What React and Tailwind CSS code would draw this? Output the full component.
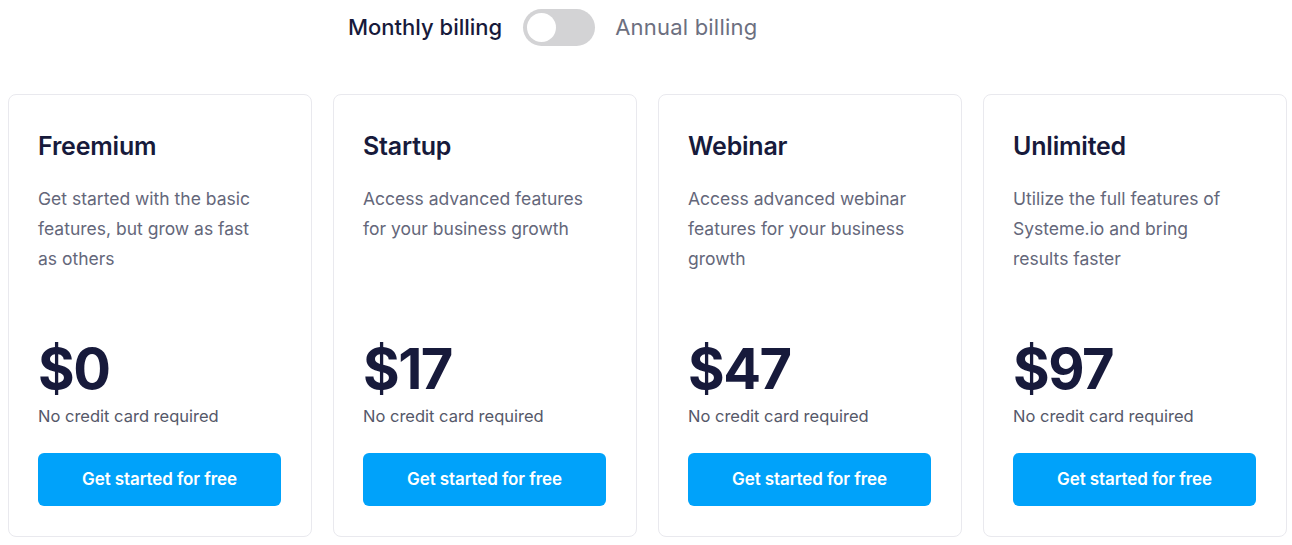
import React from "react";

const plans = [
  { name: "Freemium", desc: "Get started with the basic features, but grow as fast as others", price: "$0" },
  { name: "Startup", desc: "Access advanced features for your business growth", price: "$17" },
  { name: "Webinar", desc: "Access advanced webinar features for your business growth", price: "$47" },
  { name: "Unlimited", desc: "Utilize the full features of Systeme.io and bring results faster", price: "$97" },
];

export default function App() {
  return (
    <div className="w-[1292px] h-[545px] bg-white overflow-hidden" style={{ fontFamily: "Inter, 'Noto Sans', sans-serif" }}>
      <div className="flex items-center pl-[348px] pt-[9px] h-[46px]">
        <span className="text-[22px] font-medium text-[#171a3b] tracking-[0px]">Monthly billing</span>
        <div className="ml-[21px] mr-[20px] w-[72px] h-[37px] rounded-full bg-[#d3d3d5] flex items-center px-[4px]">
          <div className="w-[29px] h-[29px] rounded-full bg-white" />
        </div>
        <span className="text-[22px] font-normal text-[#6c6f80] tracking-[0.2px]">Annual billing</span>
      </div>
      <div className="flex gap-[21px] px-[8px] mt-[48px]">
        {plans.map((p) => (
          <div key={p.name} className="shrink-0 w-[304px] h-[443px] border border-[#e9e9ee] rounded-[8px] px-[29px] pt-[33px] pb-[30px] flex flex-col">
            <h2 className="text-[25px] font-semibold text-[#171a3b] leading-[36px] tracking-[-0.2px]">{p.name}</h2>
            <p className="mt-[20px] text-[17.5px] font-normal leading-[30px] text-[#64677a] pr-[20px] grow">{p.desc}</p>
            <div className="text-[56px] font-bold text-[#171a3b] leading-[60px] tracking-[-1.5px]">{p.price}</div>
            <div className="mt-[5px] text-[16.5px] font-normal text-[#555869] leading-[24px]">No credit card required</div>
            <button className="mt-[25px] w-[243px] h-[53px] rounded-[6px] bg-[#00a2fa] text-white text-[17px] font-semibold tracking-[-0.1px]">Get started for free</button>
          </div>
        ))}
      </div>
    </div>
  );
}
